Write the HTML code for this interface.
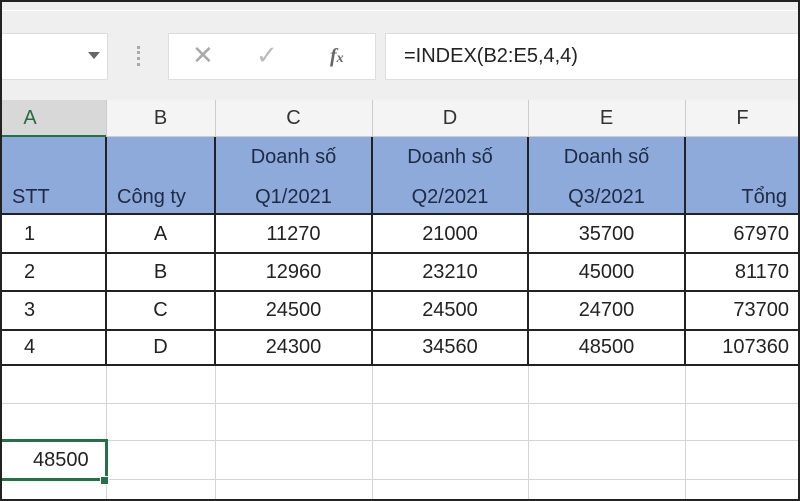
<!DOCTYPE html>
<html><head><style>
*{margin:0;padding:0;box-sizing:border-box}
body{width:800px;height:501px;overflow:hidden;background:#fff;font-family:"Liberation Sans",sans-serif;position:relative;color:#222}
.a{position:absolute}
.t{position:absolute;font-size:20px;white-space:nowrap}
.h{position:absolute;font-size:20px;color:#333;text-align:center;top:107px}
</style></head><body>
<div class="a" style="left:0;top:0;width:800px;height:100px;background:#efefef"></div>
<div class="a" style="left:0;top:10px;width:800px;height:1px;background:#fff"></div>
<div class="a" style="left:0;top:33px;width:108px;height:47px;background:#fff;border:1px solid #ddd"></div>
<div class="a" style="left:88px;top:52px;width:0;height:0;border-left:6px solid transparent;border-right:6px solid transparent;border-top:7px solid #666"></div>
<div class="a" style="left:137px;top:46px;width:3px;height:20px;border-left:3px dotted #aaa"></div>
<div class="a" style="left:168px;top:33px;width:208px;height:47px;background:#fff;border:1px solid #ddd"></div>
<div class="t" style="left:192px;top:40px;font-size:26px;color:#aaa">✕</div>
<div class="t" style="left:256px;top:40px;font-size:26px;color:#bbb">✓</div>
<div class="t" style="left:330px;top:45px;font-family:'Liberation Serif',serif;font-style:italic;font-weight:bold;color:#666;font-size:20px">f<span style="font-size:14px">x</span></div>
<div class="a" style="left:385px;top:33px;width:415px;height:47px;background:#fff;border:1px solid #ddd"></div>
<div class="t" style="left:404px;top:45px;font-size:20px;color:#222">=INDEX(B2:E5,4,4)</div>
<div class="a" style="left:0;top:100px;width:800px;height:37px;background:#f4f4f4;border-bottom:1px solid #ccc"></div>
<div class="a" style="left:0;top:100px;width:106px;height:37px;background:#d8d8d8;border-bottom:2px solid #217346"></div>
<div class="a" style="left:106px;top:100px;width:1px;height:37px;background:#ccc"></div>
<div class="a" style="left:215px;top:100px;width:1px;height:37px;background:#ccc"></div>
<div class="a" style="left:372px;top:100px;width:1px;height:37px;background:#ccc"></div>
<div class="a" style="left:528px;top:100px;width:1px;height:37px;background:#ccc"></div>
<div class="a" style="left:685px;top:100px;width:1px;height:37px;background:#ccc"></div>
<div class="h" style="left:0;width:60px;color:#2a6a3e">A</div>
<div class="h" style="left:106px;width:109px">B</div>
<div class="h" style="left:215px;width:157px">C</div>
<div class="h" style="left:372px;width:156px">D</div>
<div class="h" style="left:528px;width:157px">E</div>
<div class="h" style="left:685px;width:115px">F</div>
<div class="a" style="left:0;top:403px;width:800px;height:1px;background:#d4d4d4"></div>
<div class="a" style="left:0;top:440px;width:800px;height:1px;background:#d4d4d4"></div>
<div class="a" style="left:0;top:479px;width:800px;height:1px;background:#d4d4d4"></div>
<div class="a" style="left:106px;top:365px;width:1px;height:136px;background:#d4d4d4"></div>
<div class="a" style="left:215px;top:365px;width:1px;height:136px;background:#d4d4d4"></div>
<div class="a" style="left:372px;top:365px;width:1px;height:136px;background:#d4d4d4"></div>
<div class="a" style="left:528px;top:365px;width:1px;height:136px;background:#d4d4d4"></div>
<div class="a" style="left:685px;top:365px;width:1px;height:136px;background:#d4d4d4"></div>
<div class="a" style="left:0;top:137px;width:800px;height:77px;background:#8eaadb"></div>
<div class="a" style="left:0;top:213px;width:800px;height:2px;background:#222"></div>
<div class="a" style="left:0;top:252px;width:800px;height:2px;background:#222"></div>
<div class="a" style="left:0;top:290px;width:800px;height:2px;background:#222"></div>
<div class="a" style="left:0;top:329px;width:800px;height:2px;background:#222"></div>
<div class="a" style="left:0;top:364px;width:800px;height:2px;background:#222"></div>
<div class="a" style="left:105px;top:137px;width:2px;height:229px;background:#222"></div>
<div class="a" style="left:214px;top:137px;width:2px;height:229px;background:#222"></div>
<div class="a" style="left:371px;top:137px;width:2px;height:229px;background:#222"></div>
<div class="a" style="left:527px;top:137px;width:2px;height:229px;background:#222"></div>
<div class="a" style="left:684px;top:137px;width:2px;height:229px;background:#222"></div>
<div class="t" style="left:12px;top:186px;color:#1f2a44">STT</div>
<div class="t" style="left:117px;top:186px;color:#1f2a44">Công ty</div>
<div class="t" style="left:215px;width:157px;text-align:center;top:146px;color:#1f2a44">Doanh số</div>
<div class="t" style="left:215px;width:157px;text-align:center;top:186px;color:#1f2a44">Q1/2021</div>
<div class="t" style="left:372px;width:156px;text-align:center;top:146px;color:#1f2a44">Doanh số</div>
<div class="t" style="left:372px;width:156px;text-align:center;top:186px;color:#1f2a44">Q2/2021</div>
<div class="t" style="left:528px;width:157px;text-align:center;top:146px;color:#1f2a44">Doanh số</div>
<div class="t" style="left:528px;width:157px;text-align:center;top:186px;color:#1f2a44">Q3/2021</div>
<div class="t" style="left:685px;width:112px;text-align:right;padding-right:10px;top:186px;color:#1f2a44">Tổng</div>
<div class="t" style="left:24px;top:223px">1</div><div class="t" style="left:106px;width:109px;text-align:center;top:223px">A</div>
<div class="t" style="left:215px;width:157px;text-align:center;top:223px">11270</div><div class="t" style="left:372px;width:156px;text-align:center;top:223px">21000</div>
<div class="t" style="left:528px;width:157px;text-align:center;top:223px">35700</div><div class="t" style="left:685px;width:112px;text-align:right;padding-right:8px;top:223px">67970</div>
<div class="t" style="left:24px;top:261px">2</div><div class="t" style="left:106px;width:109px;text-align:center;top:261px">B</div>
<div class="t" style="left:215px;width:157px;text-align:center;top:261px">12960</div><div class="t" style="left:372px;width:156px;text-align:center;top:261px">23210</div>
<div class="t" style="left:528px;width:157px;text-align:center;top:261px">45000</div><div class="t" style="left:685px;width:112px;text-align:right;padding-right:8px;top:261px">81170</div>
<div class="t" style="left:24px;top:299px">3</div><div class="t" style="left:106px;width:109px;text-align:center;top:299px">C</div>
<div class="t" style="left:215px;width:157px;text-align:center;top:299px">24500</div><div class="t" style="left:372px;width:156px;text-align:center;top:299px">24500</div>
<div class="t" style="left:528px;width:157px;text-align:center;top:299px">24700</div><div class="t" style="left:685px;width:112px;text-align:right;padding-right:8px;top:299px">73700</div>
<div class="t" style="left:24px;top:336px">4</div><div class="t" style="left:106px;width:109px;text-align:center;top:336px">D</div>
<div class="t" style="left:215px;width:157px;text-align:center;top:336px">24300</div><div class="t" style="left:372px;width:156px;text-align:center;top:336px">34560</div>
<div class="t" style="left:528px;width:157px;text-align:center;top:336px">48500</div><div class="t" style="left:685px;width:112px;text-align:right;padding-right:8px;top:336px">107360</div>
<div class="a" style="left:0;top:439px;width:108px;height:42px;border:3px solid #217346;border-left:none;background:#fff"></div>
<div class="t" style="left:33px;top:449px">48500</div>
<div class="a" style="left:100px;top:476px;width:9px;height:9px;background:#217346;border:1px solid #fff"></div>
<div class="a" style="left:0;top:0;width:800px;height:501px;border:2px solid #222"></div>
</body></html>
